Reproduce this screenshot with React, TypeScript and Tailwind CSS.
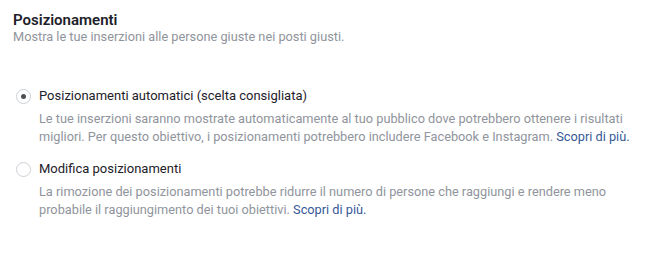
import React from 'react';

const options = [
  {
    label: 'Posizionamenti automatici (scelta consigliata)',
    lines: [
      'Le tue inserzioni saranno mostrate automaticamente al tuo pubblico dove potrebbero ottenere i risultati',
      'migliori. Per questo obiettivo, i posizionamenti potrebbero includere Facebook e Instagram.',
    ],
    checked: true,
  },
  {
    label: 'Modifica posizionamenti',
    lines: [
      'La rimozione dei posizionamenti potrebbe ridurre il numero di persone che raggiungi e rendere meno',
      'probabile il raggiungimento dei tuoi obiettivi.',
    ],
    checked: false,
  },
];

export default function App() {
  return (
    <div className="w-[651px] h-[267px] bg-white pl-[13px] pt-[11px] font-['Roboto',sans-serif]">
      <h2 className="text-[15px] leading-[18px] font-semibold text-[#1d2129]">Posizionamenti</h2>
      <p className="text-[12.75px] leading-[16px] text-[#90949c]">
        Mostra le tue inserzioni alle persone giuste nei posti giusti.
      </p>

      <div className="mt-[42px] flex flex-col gap-[14px]">
        {options.map((o) => (
          <div key={o.label} className="flex flex-col">
            <label className="flex items-center h-[18px]">
              <span className="ml-[3px] w-[15px] h-[15px] rounded-full border border-[#ccd0d5] flex items-center justify-center">
                {o.checked && <span className="w-[5px] h-[5px] rounded-full bg-[#4b4f56]" />}
              </span>
              <span className="ml-[8px] text-[13px] text-[#1d2129]">{o.label}</span>
            </label>
            <p className="mt-[5px] ml-[26px] text-[12.75px] leading-[18px] text-[#90949c] whitespace-nowrap">
              {o.lines[0]}
              <br />
              {o.lines[1]}{' '}
              <a className="text-[#365899]">Scopri di più.</a>
            </p>
          </div>
        ))}
      </div>
    </div>
  );
}
